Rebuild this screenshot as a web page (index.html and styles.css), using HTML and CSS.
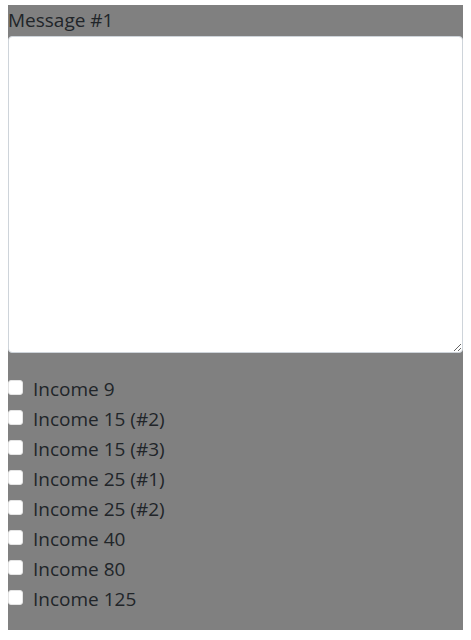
FILE: index.html
```html
<!DOCTYPE html>
<html>
<head>
<meta charset="utf-8">
<link rel="stylesheet" href="styles.css">
</head>
<body>
<div class="panel">
  <label class="msg-label" for="msg">Message #1</label>
  <textarea id="msg" class="msg"></textarea>
  <ul class="options">
    <li><label class="opt"><input type="checkbox" class="cb"><span>Income 9</span></label></li>
    <li><label class="opt"><input type="checkbox" class="cb"><span>Income 15 (#2)</span></label></li>
    <li><label class="opt"><input type="checkbox" class="cb"><span>Income 15 (#3)</span></label></li>
    <li><label class="opt"><input type="checkbox" class="cb"><span>Income 25 (#1)</span></label></li>
    <li><label class="opt"><input type="checkbox" class="cb"><span>Income 25 (#2)</span></label></li>
    <li><label class="opt"><input type="checkbox" class="cb"><span>Income 40</span></label></li>
    <li><label class="opt"><input type="checkbox" class="cb"><span>Income 80</span></label></li>
    <li><label class="opt"><input type="checkbox" class="cb"><span>Income 125</span></label></li>
  </ul>
</div>
</body>
</html>
```
FILE: styles.css
```css
html, body {
  background: #ffffff;
}
body {
  margin: 5px 8px 8px 8px;
  font-family: "Open Sans", "Noto Sans", sans-serif;
  font-size: 19px;
  line-height: 30px;
  color: #212529;
}
.panel {
  background: #808080;
  padding-bottom: 16px;
}
.msg-label {
  display: block;
  height: 31px;
}
.msg {
  display: block;
  box-sizing: border-box;
  width: 100%;
  height: 317px;
  margin: 0 0 21px 0;
  border: 1px solid #ced4da;
  border-radius: 4px;
  background: #ffffff;
  resize: vertical;
  font: inherit;
}
.options {
  list-style: none;
  margin: 0;
  padding: 0;
}
.opt {
  display: flex;
  align-items: center;
  height: 30px;
}
.cb {
  appearance: none;
  -webkit-appearance: none;
  width: 15px;
  height: 15px;
  margin: 0 10px 0 0;
  background: #ffffff;
  border: 1px solid #e4e4e4;
  border-radius: 3px;
  box-sizing: border-box;
  position: relative;
  top: -2px;
}
```
